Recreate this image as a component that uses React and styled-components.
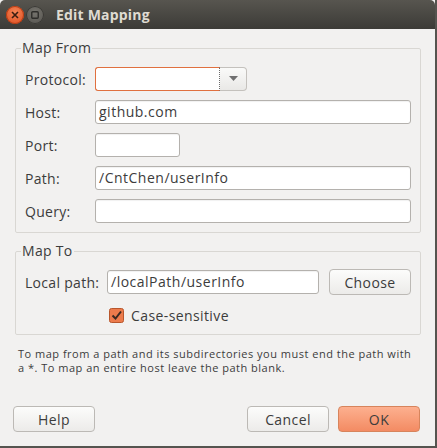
import React from "react";
import styled, { createGlobalStyle } from "styled-components";

const Global = createGlobalStyle`
  html, body {
    margin: 0;
    padding: 0;
    background: #f2f1f0;
  }
  * { box-sizing: border-box; }
`;

const Window = styled.div`
  width: 437px;
  height: 448px;
  display: flex;
  flex-direction: column;
  font-family: "Open Sans", "Noto Sans", sans-serif;
  color: #3c3c3c;
  background: #f2f1f0;
  border-right: 2px solid #55544f;
  border-bottom: 2px solid #55544f;
`;

const TitleBar = styled.div`
  height: 29px;
  flex: none;
  display: flex;
  align-items: center;
  padding-left: 6px;
  gap: 2px;
  background: linear-gradient(#57554f, #3c3b37);
  border-radius: 5px 5px 0 0;
`;

const WinButton = styled.div`
  width: 18px;
  height: 18px;
  border-radius: 50%;
  display: flex;
  align-items: center;
  justify-content: center;
  background: ${(p) =>
    p.close
      ? "radial-gradient(circle at 50% 35%, #f58556, #dc4a1d)"
      : "radial-gradient(circle at 50% 35%, #75736d, #55534e)"};
  box-shadow: inset 0 0 0 1px ${(p) => (p.close ? "#b53c14" : "#3a3935")};
`;

const Title = styled.div`
  margin-left: 10px;
  font-size: 14px;
  font-weight: 700;
  color: #dfdbd2;
  letter-spacing: 0.2px;
`;

const Body = styled.div`
  flex: 1;
  display: flex;
  flex-direction: column;
  padding: 10px 14px 14px 15px;
`;

const Group = styled.fieldset`
  margin: 0;
  padding: 0 9px 9px 8px;
  border: 1px solid #d9d7d3;
  border-radius: 2px;
  display: flex;
  flex-direction: column;
  gap: 9px;
  & + & {
    margin-top: 9px;
  }
`;

const Legend = styled.legend`
  font-size: 14px;
  line-height: 18px;
  padding: 0 1px;
  margin-left: -3px;
  margin-bottom: 10px;
  letter-spacing: 0.3px;
  color: #3c3c3c;
`;

const Row = styled.div`
  display: flex;
  align-items: center;
  height: 24px;
`;

const Label = styled.div`
  width: ${(p) => p.w || 71}px;
  flex: none;
  font-size: 14px;
  letter-spacing: 0.3px;
  padding-left: 1px;
`;

const Input = styled.div`
  height: 24px;
  width: ${(p) => (p.w ? `${p.w}px` : "auto")};
  flex: ${(p) => (p.w ? "none" : 1)};
  background: #fff;
  border: 1px solid #b4b1ad;
  border-radius: 3px;
  box-shadow: inset 0 1px 1px rgba(0, 0, 0, 0.06);
  font-size: 14px;
  letter-spacing: 0.5px;
  line-height: 22px;
  padding-left: 3px;
  white-space: nowrap;
`;

const Combo = styled.div`
  display: flex;
  width: 152px;
  height: 24px;
`;

const ComboEntry = styled.div`
  flex: 1;
  background: #fff;
  border: 1px solid #e0703f;
  border-right: 1px dotted #6b6b6b;
  border-radius: 3px 0 0 3px;
`;

const ComboButton = styled.div`
  width: 27px;
  display: flex;
  align-items: center;
  justify-content: center;
  background: linear-gradient(#fafaf9, #e9e8e6);
  border: 1px solid #c4c1bd;
  border-left: none;
  border-radius: 0 4px 4px 0;
`;

const Button = styled.div`
  width: 82px;
  height: 26px;
  flex: none;
  display: flex;
  align-items: center;
  justify-content: center;
  font-size: 14px;
  letter-spacing: 0.4px;
  border-radius: 4px;
  border: 1px solid ${(p) => (p.primary ? "#d7845c" : "#bcb9b5")};
  background: ${(p) =>
    p.primary
      ? "linear-gradient(#fdb08f, #f38b63)"
      : "linear-gradient(#fcfcfb, #ecebe9)"};
  color: #3c3c3c;
`;

const CheckRow = styled.div`
  display: flex;
  align-items: center;
  gap: 7px;
  height: 20px;
  margin-top: 2px;
  padding-left: 85px;
  font-size: 14px;
  letter-spacing: 0.4px;
`;

const Note = styled.div`
  margin-top: 12px;
  padding-left: 3px;
  font-size: 11px;
  letter-spacing: 0.5px;
  line-height: 14px;
  white-space: nowrap;
  color: #3c3c3c;
`;

const Footer = styled.div`
  margin-top: auto;
  display: flex;
  gap: 9px;
  margin-left: -2px;
  margin-right: 1px;
  & > :first-child {
    margin-right: auto;
  }
`;

export default function App() {
  return (
    <>
      <Global />
      <Window>
        <TitleBar>
          <WinButton close>
            <svg width="8" height="8" viewBox="0 0 8 8">
              <path d="M1 1L7 7M7 1L1 7" stroke="#3a1d10" strokeWidth="1.6" />
            </svg>
          </WinButton>
          <WinButton>
            <svg width="8" height="8" viewBox="0 0 8 8">
              <rect x="0.75" y="0.75" width="6.5" height="6.5" rx="1" fill="none" stroke="#2e2d2a" strokeWidth="1.4" />
            </svg>
          </WinButton>
          <Title>Edit Mapping</Title>
        </TitleBar>
        <Body>
          <Group>
            <Legend>Map From</Legend>
            <Row>
              <Label>Protocol:</Label>
              <Combo>
                <ComboEntry />
                <ComboButton>
                  <svg width="9" height="6" viewBox="0 0 9 6">
                    <path d="M0 0H9L4.5 5Z" fill="#707070" />
                  </svg>
                </ComboButton>
              </Combo>
            </Row>
            <Row>
              <Label>Host:</Label>
              <Input>github.com</Input>
            </Row>
            <Row>
              <Label>Port:</Label>
              <Input w={85} />
            </Row>
            <Row>
              <Label>Path:</Label>
              <Input>/CntChen/userInfo</Input>
            </Row>
            <Row>
              <Label>Query:</Label>
              <Input />
            </Row>
          </Group>
          <Group>
            <Legend>Map To</Legend>
            <Row>
              <Label w={83}>Local path:</Label>
              <Input w={212}>/localPath/userInfo</Input>
              <div style={{ flex: 1 }} />
              <Button>Choose</Button>
            </Row>
            <CheckRow>
              <svg width="15" height="15" viewBox="0 0 15 15">
                <rect x="0.5" y="0.5" width="14" height="14" rx="2" fill="#ec7b4c" stroke="#b8562c" />
                <path d="M3.5 7.5L6.5 10.5L12 3.5" fill="none" stroke="#3b2a22" strokeWidth="2" />
              </svg>
              Case-sensitive
            </CheckRow>
          </Group>
          <Note>
            To map from a path and its subdirectories you must end the path with
            <br />
            a *. To map an entire host leave the path blank.
          </Note>
          <Footer>
            <Button>Help</Button>
            <Button>Cancel</Button>
            <Button primary>OK</Button>
          </Footer>
        </Body>
      </Window>
    </>
  );
}
